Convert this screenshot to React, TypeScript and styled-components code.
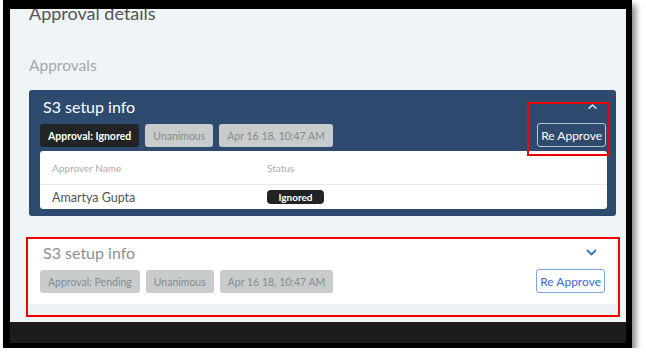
import React from 'react';
import styled, { createGlobalStyle } from 'styled-components';

const GlobalStyle = createGlobalStyle`
  body {
    margin: 0;
    background: #ffffff;
    font-family: Lato, "Open Sans", sans-serif;
  }
`;

type Tone = 'dark' | 'muted';

const approvals = [
  {
    title: 'S3 setup info',
    status: 'Ignored',
    expanded: true,
    approvers: [{ name: 'Amartya Gupta', status: 'Ignored' }],
  },
  {
    title: 'S3 setup info',
    status: 'Pending',
    expanded: false,
    approvers: [],
  },
];

function Chevron({ up, color }: { up: boolean; color: string }) {
  return (
    <svg width="11" height="7" viewBox="0 0 11 7">
      <path
        d={up ? 'M2 5.2 L5.5 2 L9 5.2' : 'M1.5 1.5 L5.5 5.5 L9.5 1.5'}
        fill="none"
        stroke={color}
        strokeWidth={up ? 1.5 : 1.8}
        strokeLinecap="round"
        strokeLinejoin="round"
      />
    </svg>
  );
}

export default function App() {
  return (
    <>
      <GlobalStyle />
      <Frame>
        <Page>
          <PageTitle>Approval details</PageTitle>
          <SectionTitle>Approvals</SectionTitle>
          <CardList>
            {approvals.map((item, index) => (
              <Card key={index} $expanded={item.expanded}>
                <CardHeader>
                  <CardInfo>
                    <CardTitle $expanded={item.expanded}>{item.title}</CardTitle>
                    <BadgeRow>
                      <Badge $tone={item.status === 'Ignored' ? 'dark' : 'muted'}>
                        Approval: {item.status}
                      </Badge>
                      <Badge $tone="muted">Unanimous</Badge>
                      <Badge $tone="muted">Apr 16 18, 10:47 AM</Badge>
                    </BadgeRow>
                  </CardInfo>
                  <CardActions>
                    <Toggle>
                      <Chevron up={item.expanded} color={item.expanded ? '#e6ebf2' : '#3a6fd0'} />
                    </Toggle>
                    <ReApprove $expanded={item.expanded}>Re Approve</ReApprove>
                    {item.expanded && <Highlight $variant="button" />}
                  </CardActions>
                </CardHeader>
                {item.expanded ? (
                  <ApproverTable>
                    <TableHead>
                      <NameCell>Approver Name</NameCell>
                      <StatusCell>Status</StatusCell>
                    </TableHead>
                    {item.approvers.map((a) => (
                      <TableRow key={a.name}>
                        <NameCell>{a.name}</NameCell>
                        <StatusCell>
                          <StatusPill>{a.status}</StatusPill>
                        </StatusCell>
                      </TableRow>
                    ))}
                  </ApproverTable>
                ) : (
                  <CollapsedBody />
                )}
                {!item.expanded && <Highlight $variant="card" />}
              </Card>
            ))}
          </CardList>
        </Page>
        <Footer />
      </Frame>
    </>
  );
}

const Frame = styled.div`
  margin-left: 3px;
  width: 616px;
  border-style: solid;
  border-color: #000;
  border-width: 9px 6px 5px 7px;
  box-shadow: 4px 5px 6px rgba(0, 0, 0, 0.45);
`;

const Page = styled.div`
  height: 313px;
  overflow: hidden;
  background: #eff4f7;
  padding: 0 10px 0 19px;
`;

const PageTitle = styled.h1`
  margin: -7px 0 0;
  font-size: 18px;
  line-height: 22px;
  font-weight: 400;
  color: #555;
`;

const SectionTitle = styled.h2`
  margin: 32px 0 0;
  font-size: 15.5px;
  line-height: 18px;
  font-weight: 400;
  color: #a4a8ab;
`;

const CardList = styled.div`
  display: flex;
  flex-direction: column;
  gap: 22px;
  margin-top: 16px;
`;

const Card = styled.div<{ $expanded: boolean }>`
  position: relative;
  border-radius: 3px;
  background: ${(p) => (p.$expanded ? '#2e4a6f' : '#ffffff')};
  padding: ${(p) => (p.$expanded ? '7px 9px 7px 11px' : '5px 10px 0 11px')};
`;

const CardHeader = styled.div`
  display: flex;
  justify-content: space-between;
  align-items: flex-end;
`;

const CardInfo = styled.div`
  display: flex;
  flex-direction: column;
  gap: 7px;
`;

const CardTitle = styled.div<{ $expanded: boolean }>`
  padding-left: 3px;
  font-size: 16px;
  line-height: 20px;
  color: ${(p) => (p.$expanded ? '#ffffff' : '#8c8f92')};
`;

const BadgeRow = styled.div`
  display: flex;
  gap: 6px;
`;

const Badge = styled.span<{ $tone: Tone }>`
  display: inline-flex;
  align-items: center;
  height: 23px;
  padding: 0 8px;
  border-radius: 3px;
  font-size: 10.5px;
  background: ${(p) => (p.$tone === 'dark' ? '#222324' : '#c9cccd')};
  color: ${(p) => (p.$tone === 'dark' ? '#ffffff' : '#868b8f')};
  font-weight: ${(p) => (p.$tone === 'dark' ? 700 : 400)};
`;

const CardActions = styled.div`
  position: relative;
  display: flex;
  flex-direction: column;
  align-items: flex-end;
  gap: 13px;
  padding-right: 1px;
`;

const Toggle = styled.div`
  display: flex;
  margin-right: 8px;
`;

const ReApprove = styled.button<{ $expanded: boolean }>`
  height: 24px;
  padding: 0 3px;
  border-radius: 3px;
  background: transparent;
  font-family: Lato, "Open Sans", sans-serif;
  font-size: 12px;
  border: 1px solid ${(p) => (p.$expanded ? '#b9c4d3' : '#7ea3e6')};
  color: ${(p) => (p.$expanded ? '#ffffff' : '#3a6bd3')};
`;

const Highlight = styled.div<{ $variant: 'button' | 'card' }>`
  position: absolute;
  border: 2px solid #f00000;
  pointer-events: none;
  ${(p) =>
    p.$variant === 'button'
      ? 'left: -10px; right: -3px; top: -1px; bottom: -9px;'
      : 'left: -3px; right: -4px; top: -1px; bottom: -3px;'}
`;

const ApproverTable = styled.div`
  margin-top: 4px;
  background: #ffffff;
  border-radius: 3px;
`;

const TableHead = styled.div`
  display: grid;
  grid-template-columns: 227px 1fr;
  align-items: center;
  height: 33px;
  border-bottom: 1px solid #e6eaed;
  font-size: 10px;
  color: #a9adb0;
`;

const TableRow = styled.div`
  display: grid;
  grid-template-columns: 227px 1fr;
  align-items: center;
  height: 24px;
  font-size: 12.5px;
  color: #555;
`;

const NameCell = styled.div`
  padding-left: 12px;
`;

const StatusCell = styled.div`
  display: flex;
  align-items: center;
`;

const StatusPill = styled.span`
  display: inline-flex;
  align-items: center;
  justify-content: center;
  width: 57px;
  height: 14px;
  border-radius: 4px;
  background: #222324;
  color: #fff;
  font-size: 10px;
  font-weight: 700;
`;

const CollapsedBody = styled.div`
  height: 10px;
  margin: 11px -10px 0 -11px;
  background: #eef2f5;
`;

const Footer = styled.div`
  height: 21px;
  background: #1c1c1c;
`;
